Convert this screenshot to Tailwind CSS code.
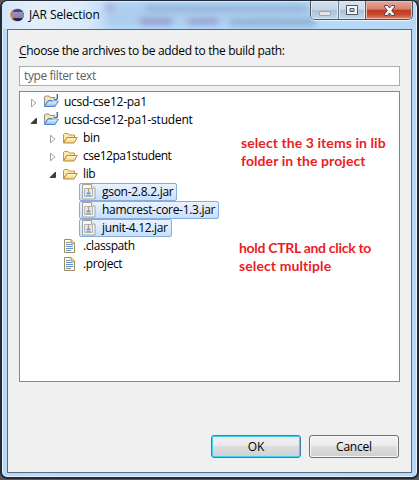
<!DOCTYPE html>
<html lang="en">
<head>
<meta charset="utf-8">
<title>JAR Selection</title>
<script src="https://cdn.jsdelivr.net/npm/@tailwindcss/browser@4"></script>
</head>
<body class="w-[419px] h-[480px] overflow-hidden bg-[#55595f] font-['Open_Sans','Noto_Sans',sans-serif] text-[12px] text-black">
<svg class="absolute w-0 h-0">
  <defs>
    <linearGradient id="fold" x1="0" y1="0" x2="0" y2="1"><stop offset="0" stop-color="#fffbe0"/><stop offset="1" stop-color="#f3cf7c"/></linearGradient>
    <linearGradient id="blue" x1="0" y1="0" x2="0" y2="1"><stop offset="0" stop-color="#eef8ff"/><stop offset="1" stop-color="#86bdf0"/></linearGradient>
    <linearGradient id="ecl" x1="0" y1="0" x2="0" y2="1"><stop offset="0" stop-color="#55499a"/><stop offset="1" stop-color="#241b4a"/></linearGradient>
    <symbol id="closed" viewBox="0 0 8 10"><path d="M1.500 1.200v7.600L6 5z" fill="#fff" stroke="#a0a0a0"/></symbol>
    <symbol id="open" viewBox="0 0 8 10"><path d="M6.500 2v5.500H1z" fill="#404040" stroke="#262626" stroke-width=".8"/></symbol>
    <symbol id="folder" viewBox="0 0 16 16"><path d="M1.500 12.500v-8l1-1h3.500l1.200 1.500h5.300v2.500H5z" fill="#fde9ae" stroke="#c59443"/><path d="M1.500 13L5 7.500h10.300L12 13z" fill="url(#fold)" stroke="#bf8735"/></symbol>
    <symbol id="project" viewBox="0 0 16 16"><path d="M1.500 13V4l1-1h3.500l1.200 1.500h4.800v3H5z" fill="#fbe3a0" stroke="#8491a8"/><path d="M1.500 13.500L5 8h10.300L12 13.500z" fill="url(#blue)" stroke="#4d80c6"/><path d="M14.300 1v4q0 2-1.800 2t-1.800-1.300" fill="none" stroke="#fff" stroke-width="3"/><path d="M14.300 1v4q0 2-1.800 2t-1.800-1.300" fill="none" stroke="#3470b2" stroke-width="1.400"/></symbol>
    <symbol id="jar" viewBox="0 0 16 16"><path d="M1.500 .5h9l3.500 3.500v11H1.500z" fill="#f6f6f2" stroke="#a3a39b"/><path d="M10.500 .5v3.500h3.500" fill="#fff" stroke="#a3a39b"/><path d="M3.500 4.500h8v8h-8z" fill="#e2eaf2" stroke="#a8b4c0"/><path d="M8.200 4.500c-2.500 2 .5 2-.7 4" fill="none" stroke="#e0924e" stroke-width="1.300"/><path d="M5.500 8.500h4v1q-2 1.500-4 0z" fill="#6a90b5"/><path d="M5 11.300h5" stroke="#7c9ebd"/></symbol>
    <symbol id="file" viewBox="0 0 16 16"><path d="M2.500 1.500h6.500l3.500 3.500v9.500h-10z" fill="#fdfdf3" stroke="#a08b57"/><path d="M9 1.500v3.500h3.500" fill="#ecd7a2" stroke="#b18c48"/><path d="M4 4.500h4M4 6.500h7M4 8.500h7M4 10.500h7M4 12.500h5" stroke="#6c8fc4"/></symbol>
  </defs>
</svg>
<div class="relative w-[419px] h-[479px] rounded-[7px] border-2 border-t-1 border-[#252b36] bg-[linear-gradient(90deg,#b8d8f8,#b6dcfc_50%,#b6d8f6)] shadow-[inset_0_0_0_1px_#e4f3ff] overflow-hidden flex flex-col px-[5px] pb-[5px]">
  <div class="absolute left-[100px] top-[3px] w-[212px] h-[22px] blur-[3px] bg-[#a6c4e6]/60"></div>
  <div class="absolute left-0 top-[1px] w-[110px] h-[27px] bg-[linear-gradient(90deg,#d3e7fa,#e2effb_30%,#dcebfa_75%,transparent)]"></div>
  <div class="absolute left-[104px] top-[3px] w-[6px] h-[7px] bg-[#a05a8c]/40 blur-[3px]"></div>
  <div class="absolute left-[144px] top-[5px] w-[160px] h-[5px] bg-[#7189b5]/50 blur-[3px]"></div>
  <div class="absolute left-[138px] top-[18px] w-[32px] h-[5px] bg-[#704e94]/50 blur-[3px]"></div>
  <div class="absolute left-[186px] top-[18px] w-[30px] h-[5px] bg-[#704e94]/45 blur-[3px]"></div>
  <div class="absolute left-[228px] top-[19px] w-[86px] h-[5px] bg-[#607fa7]/50 blur-[3px]"></div>
  <header class="relative h-[28px] flex shrink-0">
    <svg class="w-[14px] h-[14px] mt-[7px] ml-[3px]" viewBox="0 0 14 14"><circle cx="6.300" cy="7" r="6.300" fill="#f2963c"/><circle cx="7.800" cy="7" r="6.200" fill="url(#ecl)"/><path d="M2 5h11.500M1.800 7h12M2 9h11.500" stroke="#e5e2f4" stroke-width="1.100"/></svg>
    <h1 class="ml-[5px] mt-[6px] leading-[16px] w-[74px] whitespace-nowrap tracking-[-0.1px]">JAR Selection</h1>
    <div class="ml-auto mr-[-1px] flex w-[103px] h-[19px] border border-t-0 border-[#495564] rounded-b-[5px] overflow-hidden shadow-[0_1px_1px_#e9f5ff]">
      <div class="w-[28px] border-r border-[#6c7b8c] bg-[linear-gradient(#d5e0ec,#c4d3e5_48%,#acc1d8_50%,#c1d5e9)] shadow-[inset_0_0_0_1px_#dbe8f5] flex justify-center"><i class="block mt-[10px] w-[12px] h-[5px] bg-[#e3e6e9] border border-[#9aa7b5] rounded-[1px]"></i></div>
      <div class="w-[27px] border-r border-[#6c5459] bg-[linear-gradient(#d9e4f0,#c9d8e9_48%,#a6bdd5_50%,#c4daee)] shadow-[inset_0_0_0_1px_#dbe8f5] flex justify-center"><svg class="w-[12px] h-[10px] mt-[4px]" viewBox="0 0 12 10"><path fill-rule="evenodd" d="M.5.5h11v9H.500zM4 3.500h4v3H4z" fill="#f5f6f7" stroke="#4d5766"/></svg></div>
      <div class="flex-1 bg-[linear-gradient(#e9aa9d,#d77f6e_46%,#bd3b25_50%,#c9482e_75%,#e08a70)] shadow-[inset_0_0_0_1px_#efb8aa] flex justify-center"><svg class="w-[13px] h-[11px] mt-[4px]" viewBox="0 0 13 11"><path d="M1.500 .5h3l2 2.500 2-2.500h3v1.500L8.700 5.500l2.800 3.500v1.500h-3l-2-2.500-2 2.500h-3V9l2.800-3.500L1.500 2z" fill="#f7f7f7" stroke="#57465a"/></svg></div>
    </div>
  </header>
  <main class="relative w-[405px] h-[444px] shrink-0 bg-[#f0f0f0] border border-[#5c6b7c] pl-[11px] pt-[12px] flex flex-col">
    <p class="h-[18px] leading-[18px] whitespace-nowrap"><span class="tracking-[-0.33px]"><u class="underline-offset-2">C</u>hoose the archives to be added to the build path:</span></p>
    <div class="mt-[6px] w-[381px] h-[20px] bg-white border border-[#abadb3] pl-[4px] leading-[18px] text-[#606060] whitespace-nowrap tracking-[-0.4px]">type filter text</div>
    <div class="relative mt-[5px] w-[381px] h-[291px] bg-white border border-[#828790] pt-[1px] leading-[18px] whitespace-nowrap">
      <ul class="tracking-[-0.35px]">
        <li class="flex items-center h-[18px] pl-[10px]"><svg class="w-2 h-[10px] mt-[2px]"><use href="#closed"/></svg><svg class="w-4 h-4 ml-[5px] mb-[2px]"><use href="#project"/></svg><span class="ml-[5px] tracking-[-0.28px]">ucsd-cse12-pa1</span></li>
        <li class="flex items-center h-[18px] pl-[10px]"><svg class="w-2 h-[10px] mt-[2px]"><use href="#open"/></svg><svg class="w-4 h-4 ml-[5px] mb-[2px]"><use href="#project"/></svg><span class="ml-[5px] tracking-[-0.23px]">ucsd-cse12-pa1-student</span></li>
        <li class="flex items-center h-[18px] pl-[29px]"><svg class="w-2 h-[10px] mt-[2px]"><use href="#closed"/></svg><svg class="w-4 h-4 ml-[5px]"><use href="#folder"/></svg><span class="ml-[5px]">bin</span></li>
        <li class="flex items-center h-[18px] pl-[29px]"><svg class="w-2 h-[10px] mt-[2px]"><use href="#closed"/></svg><svg class="w-4 h-4 ml-[5px]"><use href="#folder"/></svg><span class="ml-[5px] tracking-[-0.5px]">cse12pa1student</span></li>
        <li class="flex items-center h-[18px] pl-[29px]"><svg class="w-2 h-[10px] mt-[2px]"><use href="#open"/></svg><svg class="w-4 h-4 ml-[5px]"><use href="#folder"/></svg><span class="ml-[5px]">lib</span></li>
        <li class="ml-[59px] w-[98px] flex items-center h-[18px] pl-[1px] border border-[#84acdd] rounded-[2px] bg-[linear-gradient(#eaf3fe,#c9dffc)]"><svg class="w-4 h-4 shrink-0"><use href="#jar"/></svg><span class="ml-[5px] tracking-[-0.28px]">gson-2.8.2.jar</span></li>
        <li class="ml-[59px] w-[140px] flex items-center h-[18px] pl-[1px] border border-[#84acdd] rounded-[2px] bg-[linear-gradient(#eaf3fe,#c9dffc)]"><svg class="w-4 h-4 shrink-0"><use href="#jar"/></svg><span class="ml-[5px] tracking-[-0.3px]">hamcrest-core-1.3.jar</span></li>
        <li class="ml-[59px] w-[93px] flex items-center h-[18px] pl-[1px] border border-[#84acdd] rounded-[2px] bg-[linear-gradient(#eaf3fe,#c9dffc)]"><svg class="w-4 h-4 shrink-0"><use href="#jar"/></svg><span class="ml-[5px]">junit-4.12.jar</span></li>
        <li class="flex items-center h-[18px] pl-[42px]"><svg class="w-4 h-4"><use href="#file"/></svg><span class="ml-[5px] tracking-[-0.4px]">.classpath</span></li>
        <li class="flex items-center h-[18px] pl-[42px]"><svg class="w-4 h-4"><use href="#file"/></svg><span class="ml-[5px] tracking-[-0.4px]">.project</span></li>
      </ul>
      <p class="absolute left-[221px] top-[42px] text-[#ed1c24] font-bold text-[14px] leading-[18px] tracking-[0.08px] font-['Lato','Open_Sans',sans-serif]">select the 3 items in lib<br>folder in the project</p>
      <p class="absolute left-[219px] top-[147px] text-[#ed1c24] font-bold text-[14px] leading-[18px] tracking-[-0.3px] font-['Lato','Open_Sans',sans-serif]">hold CTRL and click to<br><span class="tracking-[0.1px]">select multiple</span></p>
    </div>
    <div class="mt-[53px] ml-[192px] flex gap-[8px] tracking-[-0.2px]">
      <button class="w-[90px] h-[23px] rounded-[3px] border border-[#3c7fb1] shadow-[inset_0_0_0_1px_#42d0f5] bg-[linear-gradient(#f0f0f0,#e9e9e9_48%,#dcdcdc_50%,#ced3d5)] leading-[20px]">OK</button>
      <button class="w-[90px] h-[23px] rounded-[3px] border border-[#707070] shadow-[inset_0_0_0_1px_#f9f9f9] bg-[linear-gradient(#f2f2f2,#ebebeb_48%,#dddddd_50%,#cfcfcf)] leading-[20px]">Cancel</button>
    </div>
  </main>
</div>
</body>
</html>
